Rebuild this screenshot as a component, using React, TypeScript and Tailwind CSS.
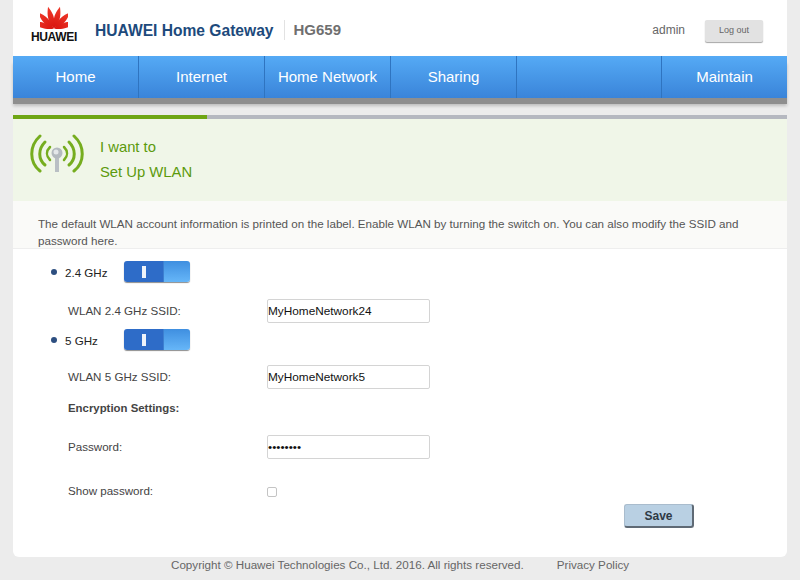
const font = "font-['Liberation_Sans',Arial,sans-serif]";

function Logo() {
  const petals = [-72, -44, -15, 15, 44, 72];
  return (
    <div className="w-[48px] flex flex-col items-center">
      <svg width="28" height="24" viewBox="0 0 28 24" className="block">
        <defs>
          <linearGradient id="petal" x1="0" y1="0" x2="0" y2="1">
            <stop offset="0" stopColor="#f0392a" />
            <stop offset="1" stopColor="#d8140f" />
          </linearGradient>
        </defs>
        {petals.map((a, i) => (
          <path
            key={i}
            d="M14 23.5 C11.6 18.5 10.8 13 11.4 9.5 C11.8 6.5 13 3.5 14 1 C15 3.5 16.2 6.5 16.6 9.5 C17.2 13 16.4 18.5 14 23.5 Z"
            fill="url(#petal)"
            transform={`rotate(${a} 14 24)`}
          />
        ))}
      </svg>
      <span className="text-[12px] leading-[13px] font-bold text-[#111] tracking-[-0.3px] mt-[2px]">HUAWEI</span>
    </div>
  );
}

function WifiIcon() {
  return (
    <svg width="56" height="42" viewBox="0 0 56 42" className="block">
      <g fill="none" stroke="#76ad1f" strokeLinecap="round">
        <path d="M11 2 C0 12 0 28 11 37" strokeWidth="3" />
        <path d="M16 8 C9 15 9 25 16 31" strokeWidth="3" />
        <path d="M21 13 C17 17 17 22 21 26" strokeWidth="2.5" />
        <path d="M45 2 C56 12 56 28 45 37" strokeWidth="3" />
        <path d="M40 8 C47 15 47 25 40 31" strokeWidth="3" />
        <path d="M35 13 C39 17 39 22 35 26" strokeWidth="2.5" />
      </g>
      <rect x="26" y="22" width="4" height="16" fill="#b9bfc4" />
      <circle cx="28" cy="19" r="5.5" fill="#b4babf" />
      <circle cx="27" cy="18" r="2.5" fill="#e4e7e9" />
    </svg>
  );
}

function Toggle() {
  return (
    <div className="w-[66px] h-[21px] flex rounded-[3px] overflow-hidden shadow-[0_1px_1px_rgba(0,0,0,0.45)]">
      <div className="w-[39px] bg-[#2e6cc8] flex items-center justify-center">
        <div className="w-[4px] h-[12px] bg-[#eef3fa]" />
      </div>
      <div className="flex-1 bg-gradient-to-b from-[#3f8fe0] to-[#66b6f8] border-l border-[#3d7fd0]" />
    </div>
  );
}

function Field({ label, value, type = "text", mt }: { label: string; value: string; type?: string; mt: string }) {
  return (
    <div className={`flex items-center h-[24px] ${mt}`}>
      <span className="w-[201px] pl-[2px] text-[11.6px] text-[#444]">{label}</span>
      <input
        readOnly
        type={type}
        value={value}
        className="w-[163px] h-[24px] bg-white border border-[#d4d4d4] rounded-[2px] pl-0 text-[11.8px] text-[#111] outline-none"
      />
    </div>
  );
}

export default function App() {
  const nav = [
    ["Home", "w-[126px]"],
    ["Internet", "w-[126px]"],
    ["Home Network", "w-[126px]"],
    ["Sharing", "w-[126px]"],
    ["", "w-[145px]"],
    ["Maintain", "flex-1"],
  ];
  return (
    <div className={`w-[800px] h-[580px] overflow-hidden bg-[#ececec] px-[13px] ${font}`}>
      <header className="h-[56px] bg-white flex items-center">
        <div className="ml-[17px] mt-[-7px]">
          <Logo />
        </div>
        <span className="ml-[17px] mt-[5px] text-[15.6px] font-bold text-[#1d4a7c]">HUAWEI Home Gateway</span>
        <div className="ml-[10px] mt-[4px] w-px h-[20px] bg-[#e2e2e2]" />
        <span className="ml-[9px] mt-[5px] text-[15px] font-bold text-[#6f6f6f]">HG659</span>
        <span className="ml-auto mt-[4px] text-[12px] text-[#666]">admin</span>
        <button className="ml-[20px] mr-[24px] mt-[6px] w-[58px] h-[22px] bg-[#e2e2e2] rounded-[2px] shadow-[0_1px_1px_rgba(0,0,0,0.35)] text-[9px] text-[#666]">
          Log out
        </button>
      </header>

      <nav className="h-[42px] flex bg-gradient-to-b from-[#55aaf5] to-[#3a84d9] shadow-[0_6px_0_#8e8e8e,0_8px_3px_rgba(0,0,0,0.2)]">
        {nav.map(([t, w], i) => (
          <div
            key={i}
            className={`${w} flex items-center justify-center text-[15px] text-white ${i < 5 ? "border-r border-[#2f74c0]" : ""}`}
          >
            {t}
          </div>
        ))}
      </nav>

      <div className="mt-[17px] h-[4px] bg-[#b5b8c0]">
        <div className="w-[194px] h-full bg-[#6ea515]" />
      </div>

      <section className="h-[82px] bg-[#f0f6e8] flex items-center">
        <div className="ml-[16px] mt-[-10px]">
          <WifiIcon />
        </div>
        <div className="ml-[15px] text-[14.8px] leading-[25px] text-[#5c9a0c]">
          <div>I want to</div>
          <div>Set Up WLAN</div>
        </div>
      </section>

      <main className="h-[356px] bg-white rounded-b-[6px] flex flex-col">
        <div className="bg-[#fafaf8] border-b border-[#eee] h-[48px] pl-[25px] pr-[20px] pt-[14px] text-[11.64px] leading-[17px] text-[#555]">
          The default WLAN account information is printed on the label. Enable WLAN by turning the switch on. You can also modify the SSID and password here.
        </div>

        <div className="pl-[38px] flex flex-col flex-1">
          <div className="flex items-center h-[21px] mt-[12px]">
            <span className="w-[6px] h-[6px] rounded-full bg-[#2d4f80]" />
            <span className="ml-[8px] w-[59px] text-[11.6px] text-[#222] pt-[2px]">2.4 GHz</span>
            <Toggle />
          </div>
          <div className="pl-[15px]">
            <Field label="WLAN 2.4 GHz SSID:" value="MyHomeNetwork24" mt="mt-[17px]" />
          </div>
          <div className="flex items-center h-[21px] mt-[6px]">
            <span className="w-[6px] h-[6px] rounded-full bg-[#2d4f80]" />
            <span className="ml-[8px] w-[59px] text-[11.6px] text-[#222] pt-[2px]">5 GHz</span>
            <Toggle />
          </div>
          <div className="pl-[15px]">
            <Field label="WLAN 5 GHz SSID:" value="MyHomeNetwork5" mt="mt-[15px]" />
            <div className="pl-[2px] mt-[12px] h-[14px] leading-[14px] text-[11.4px] font-bold text-[#444]">Encryption Settings:</div>
            <Field label="Password:" value="aaaaaaaa" type="password" mt="mt-[20px]" />
            <div className="flex items-center h-[14px] mt-[25px]">
              <span className="w-[201px] pl-[2px] text-[11.6px] text-[#444]">Show password:</span>
              <span className="w-[10px] h-[10px] mt-[2px] border border-[#c4c4c4] rounded-[2px] bg-white" />
            </div>
          </div>
          <div className="flex justify-end pr-[93px] mt-[6px]">
            <button className="w-[70px] h-[24px] rounded-[3px] bg-[#b9d0e3] border border-[#a9bccd] border-r-[#5f6a75] border-b-[#5f6a75] border-r-2 border-b-2 text-[12px] font-bold text-[#2f3a45]">
              Save
            </button>
          </div>
        </div>
      </main>

      <footer className="flex mt-[-3px] h-[22px] items-center text-[11.64px] text-[#666]">
        <span className="ml-[158px]">Copyright © Huawei Technologies Co., Ltd. 2016. All rights reserved.</span>
        <span className="ml-[33px]">Privacy Policy</span>
      </footer>
    </div>
  );
}
